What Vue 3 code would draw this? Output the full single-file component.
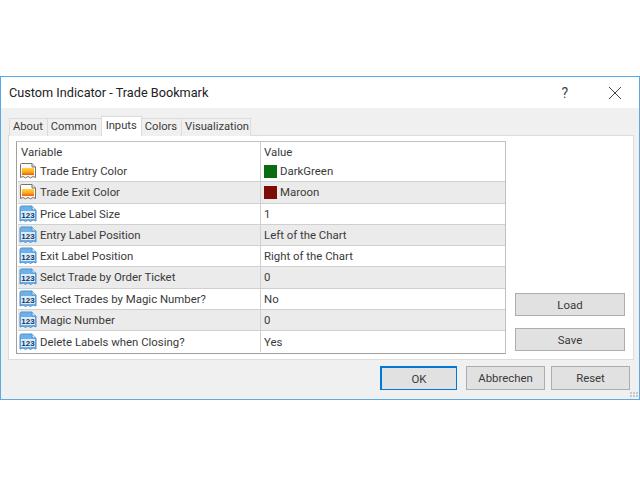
<script setup>
const rows = [
  { name: "Trade Entry Color", value: "DarkGreen", swatch: "#0b6b12", type: "color" },
  { name: "Trade Exit Color", value: "Maroon", swatch: "#7e0a0a", type: "color" },
  { name: "Price Label Size", value: "1", type: "num" },
  { name: "Entry Label Position", value: "Left of the Chart", type: "num" },
  { name: "Exit Label Position", value: "Right of the Chart", type: "num" },
  { name: "Selct Trade by Order Ticket", value: "0", type: "num" },
  { name: "Select Trades by Magic Number?", value: "No", type: "num" },
  { name: "Magic Number", value: "0", type: "num" },
  { name: "Delete Labels when Closing?", value: "Yes", type: "num" },
];
const tabs = ["About", "Common", "Inputs", "Colors", "Visualization"];
</script>

<template>
  <div class="page">
    <div class="window">
      <div class="titlebar">
        <span class="title">Custom Indicator - Trade Bookmark</span>
        <span class="help">?</span>
        <svg class="close" width="14" height="14" viewBox="0 0 14 14">
          <path d="M1 1L13 13M13 1L1 13" stroke="#444" stroke-width="1" fill="none" />
        </svg>
      </div>

      <div class="body">
        <div class="tabs">
          <div v-for="t in tabs" :key="t" class="tab" :class="{ active: t === 'Inputs' }">{{ t }}</div>
        </div>

        <div class="panel">
          <div class="table">
            <div class="row head">
              <div class="cell first">Variable</div>
              <div class="cell">Value</div>
            </div>
            <div v-for="(r, i) in rows" :key="r.name" class="row" :class="{ odd: i % 2 === 1 }">
              <div class="cell first">
                <svg class="icon" width="18" height="18" viewBox="0 0 18 18">
                  <template v-if="r.type === 'color'">
                    <defs>
                      <linearGradient :id="'heat' + i" x1="0" y1="0" x2="0" y2="1">
                        <stop offset="0" stop-color="#ffd23a" />
                        <stop offset="0.5" stop-color="#ffb020" />
                        <stop offset="1" stop-color="#f4580f" />
                      </linearGradient>
                    </defs>
                    <path d="M1.500 15.500V2.500Q1.500 1.500 2.500 1.500H13L16.500 5V15.500L14 14.500L11.500 15.800L9 14.500L6.500 15.800L4 14.500Z" fill="#fbfbfb" stroke="#77716a" />
                    <path d="M13 1.500V5H16.500" fill="#e4e4e4" stroke="#77716a" />
                    <rect x="3" y="6" width="12" height="7" :fill="'url(#heat' + i + ')'" />
                  </template>
                  <template v-else>
                    <path d="M1 16V2.500Q1 1 2.500 1H13L17 5V16L14.500 15L11.500 16.500L9 15L6.500 16.500L4 15Z" fill="#6fb0e8" stroke="#4f93d2" />
                    <path d="M13 1V5H17" fill="#d6e9f8" stroke="#4f93d2" />
                    <rect x="2" y="6" width="14" height="8" fill="#d8ebfa" />
                    <text x="9" y="12.800" class="icon-text">123</text>
                  </template>
                </svg>
                <span class="name">{{ r.name }}</span>
              </div>
              <div class="cell">
                <span v-if="r.swatch" class="swatch" :style="{ background: r.swatch }"></span>
                <span>{{ r.value }}</span>
              </div>
            </div>
          </div>

          <div class="side">
            <button class="btn side-btn">Load</button>
            <button class="btn side-btn">Save</button>
          </div>
        </div>

        <div class="footer">
          <button class="btn foot-btn ok">OK</button>
          <button class="btn foot-btn abort">Abbrechen</button>
          <button class="btn foot-btn">Reset</button>
        </div>
        <svg class="grip" width="8" height="6" viewBox="0 0 8 6">
          <path d="M0 0h2v2H0zM3 0h2v2H3zM0 3h2v2H0zM3 3h2v2H3zM6 3h2v2H6zM6 0h2v2H6z" fill="#c8c8c8" />
        </svg>
      </div>
    </div>
  </div>
</template>

<style>
html,
body {
  background: #fff;
}
</style>

<style scoped>
.page {
  width: 640px;
  height: 480px;
  padding-top: 76px;
  box-sizing: border-box;
  font-family: Roboto, "Noto Sans", sans-serif;
  font-size: 11.4px;
  color: #3a3a3a;
}

.window {
  height: 324px;
  box-sizing: border-box;
  border: 1px solid #5aaae8;
  display: flex;
  flex-direction: column;
}

.titlebar {
  height: 31px;
  flex-shrink: 0;
  background: #fff;
  display: flex;
  align-items: center;
  padding-left: 8px;
}

.title {
  font-size: 12.7px;
  color: #222;
  flex: 1;
}

.help {
  font-size: 14px;
  color: #444;
  margin-right: 40px;
}

.close {
  margin-right: 17px;
}

.body {
  position: relative;
  flex: 1;
  background: #f0f0f0;
  padding: 8px 5px 0 7px;
  display: flex;
  flex-direction: column;
}

.tabs {
  display: flex;
  height: 20px;
  align-items: flex-end;
  padding-left: 1px;
  margin-bottom: -1px;
  position: relative;
  z-index: 1;
  font-size: 11.2px;
}

.tab {
  height: 18px;
  box-sizing: border-box;
  padding: 0 4px 0 3px;
  line-height: 16px;
  background: #f0f0f0;
  border: 1px solid #dcdcdc;
  border-bottom: none;
  margin-right: -1px;
}

.tab:last-child {
  padding-right: 1px;
}

.tab.active {
  height: 20px;
  line-height: 17px;
  padding: 0 4px;
  background: #fff;
  position: relative;
  z-index: 1;
}

.panel {
  height: 225px;
  box-sizing: border-box;
  background: #fff;
  border: 1px solid #dcdcdc;
  padding: 5px 0 0 7px;
  display: flex;
}

.table {
  width: 490px;
  height: 213px;
  flex-shrink: 0;
  box-sizing: border-box;
  border: 1px solid #a0a0a0;
  border-top-color: #c0c0c0;
  border-right-color: #c0c0c0;
  padding-left: 1px;
}

.row {
  display: grid;
  grid-template-columns: 243px 1fr;
  height: 21.250px;
  box-sizing: border-box;
  border-bottom: 1px solid #d0d0d0;
}

.row:last-child {
  border-bottom: none;
}

.row.head {
  height: 19px;
  border-bottom: none;
}

.row.odd {
  background: #ebebeb;
}

.cell {
  display: flex;
  align-items: center;
  padding-left: 3px;
  white-space: nowrap;
}

.cell.first {
  border-right: 1px solid #d0d0d0;
}

.row:not(.head) .cell.first {
  padding-left: 1px;
}

.icon {
  flex-shrink: 0;
  margin-right: 3px;
}

.icon-text {
  font-family: "Liberation Sans", sans-serif;
  font-size: 8px;
  font-weight: 700;
  fill: #17375e;
  text-anchor: middle;
}

.swatch {
  width: 13px;
  height: 13px;
  margin-right: 3px;
}

.side {
  width: 110px;
  margin-left: 9px;
  display: flex;
  flex-direction: column;
  gap: 12px;
  padding-top: 152px;
  box-sizing: border-box;
}

.btn {
  font: inherit;
  color: #3a3a3a;
  background: #e1e1e1;
  border: 1px solid #adadad;
  padding: 0;
  box-sizing: border-box;
}

.side-btn {
  width: 110px;
  height: 23px;
}

.footer {
  display: flex;
  justify-content: flex-end;
  padding: 6px 4px 0 0;
  gap: 6px;
}

.foot-btn {
  width: 79px;
  height: 24px;
}

.foot-btn.ok {
  width: 77px;
  border: 1px solid #0078d7;
  border-width: 2px 1px 1px 2px;
}

.foot-btn.abort {
  margin-left: 3px;
}

.grip {
  position: absolute;
  right: 1px;
  bottom: 1px;
}
</style>
